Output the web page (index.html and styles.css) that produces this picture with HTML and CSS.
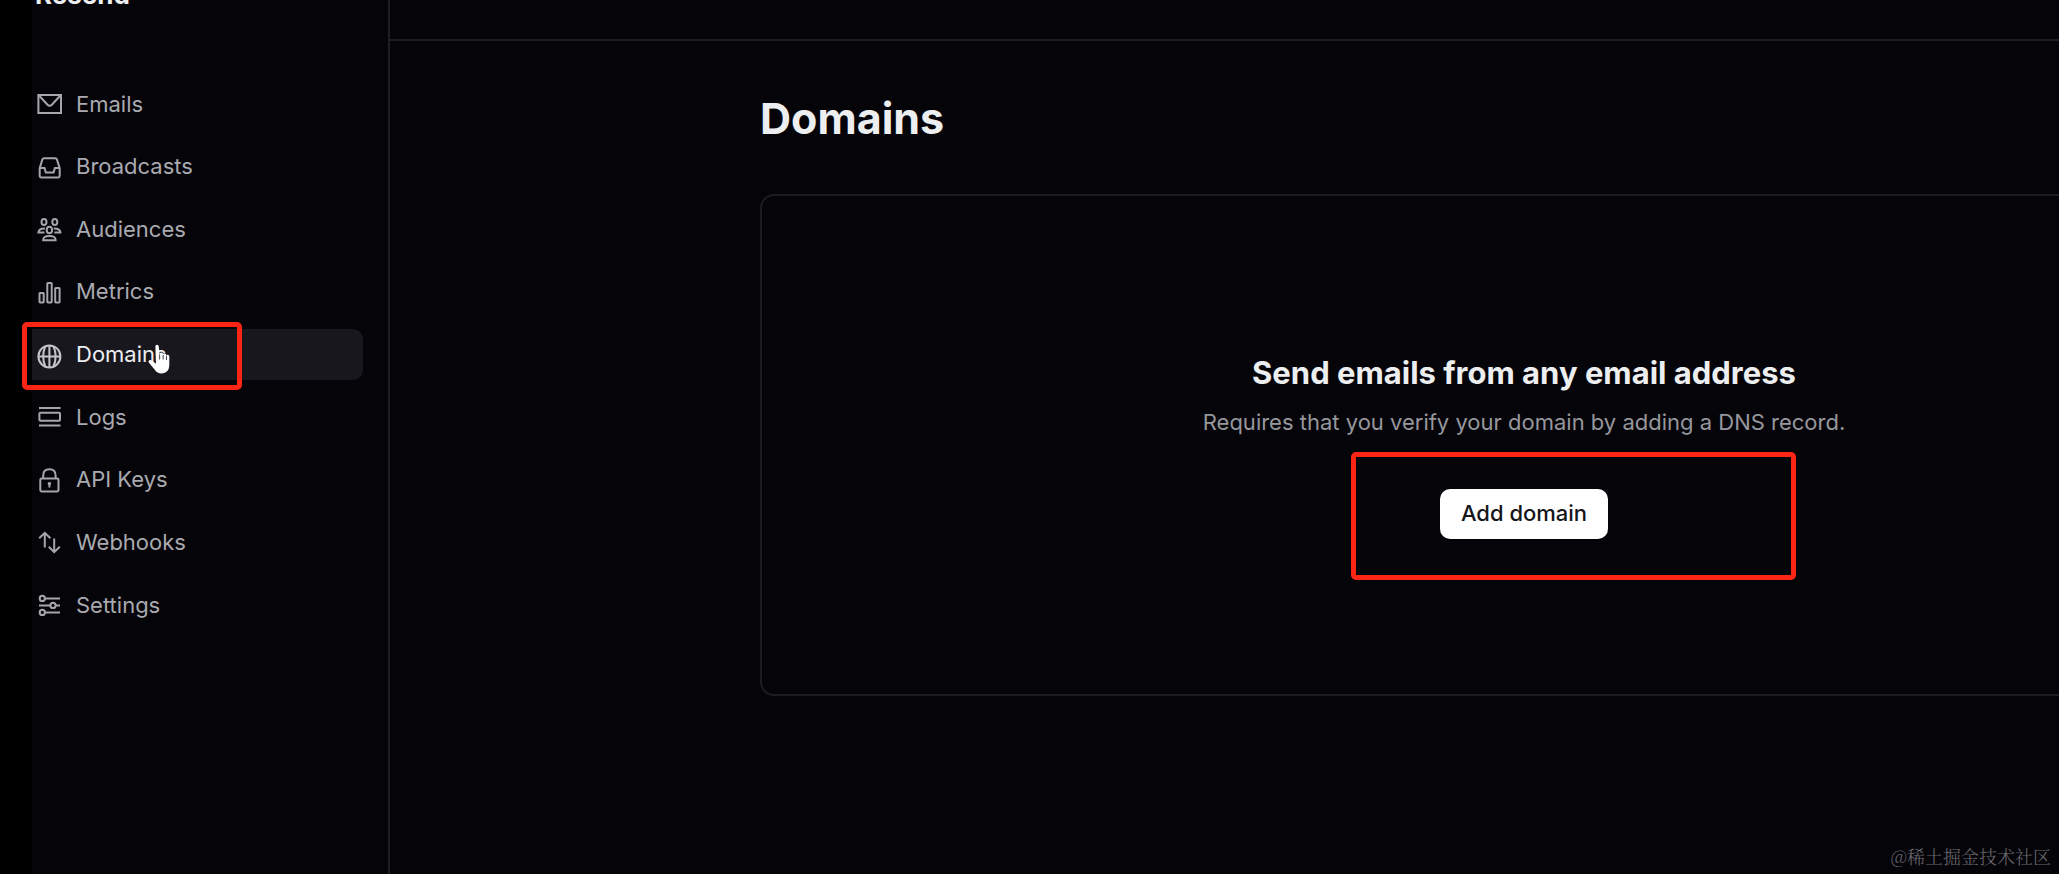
FILE: index.html
```html
<!DOCTYPE html>
<html lang="en">
<head>
  <meta charset="UTF-8">
  <title>Domains · Resend</title>
  <meta name="viewport" content="width=device-width, initial-scale=1.0">
  <link rel="stylesheet" href="styles.css">
</head>
<body>

  <aside class="sidebar">
    <div class="logo">Resend</div>
    <nav class="nav">
      <a href="#">
        <svg viewBox="0 0 25 25"><rect x="1.4" y="4" width="22.6" height="18"/><path d="M2 4.5l8.3 9q2.4 2.4 4.8 0l8.3-9"/></svg>
        Emails
      </a>
      <a href="#">
        <svg viewBox="0 0 25 25"><path d="M7 4.2h11.2q1.3 0 1.7 1.2l2.8 8.8v7.8q0 1.4-1.4 1.4H4.1q-1.4 0-1.4-1.4v-7.8l2.7-8.8q.4-1.2 1.6-1.2z"/><path d="M2.7 14h4.8l1.3 4.4h7.8l1.3-4.4h4.8"/></svg>
        Broadcasts
      </a>
      <a href="#">
        <svg viewBox="0 0 25 25"><ellipse cx="7" cy="6" rx="2.5" ry="3.1"/><ellipse cx="17.8" cy="6" rx="2.5" ry="3.1"/><ellipse cx="12.4" cy="14" rx="2.7" ry="3.3"/><path d="M7.5 16.4H1.4q.4-4.2 6.6-4M17.3 16.4h6.1q-.4-4.2-6.6-4M6.2 24.2q-.3-4.3 6.2-4.3t6.2 4.3z"/></svg>
        Audiences
      </a>
      <a href="#">
        <svg viewBox="0 0 25 25"><rect x="2.5" y="14" width="4.2" height="9.4" rx=".6"/><rect x="10.3" y="4" width="4.4" height="19.4" rx=".6"/><rect x="18.2" y="9" width="4.4" height="14.4" rx=".6"/></svg>
        Metrics
      </a>
      <a href="#" class="active">
        <svg viewBox="0 0 25 25"><circle cx="12.4" cy="14.4" r="11"/><path d="M12.4 3.4v22M1.4 14.4h22M8.4 4.2q-4.6 10.2 0 20.4M16.4 4.2q4.6 10.2 0 20.4"/></svg>
        Domains
        <span class="mark mark-nav"></span>
        <svg class="cursor" viewBox="0 0 26 34"><path d="M8 2.5q0-2 1.8-2t1.8 2l1 8.2q.3-2 2-1.8t1.8 2.2q.5-1.6 2-1.2t1.5 2.2q.6-1.2 1.9-.8t1.3 2.2v9.5q-.5 8-8 8.7-5 .2-8-4.3L.8 19.6q-.8-1.4.5-2.2 1.5-.8 3.6.6L8.6 21z"/><path class="lines" d="M12.6 11v5.5M16.4 11.5v5M20 12.5v4.5"/></svg>
      </a>
      <a href="#">
        <svg viewBox="0 0 25 25"><path d="M2 4h21.5M2 21.6h21.5"/><rect x="2.4" y="8.8" width="20.6" height="8" rx="1"/></svg>
        Logs
      </a>
      <a href="#">
        <svg viewBox="0 0 25 25"><rect x="3.3" y="11.4" width="18.2" height="13" rx="1.4"/><path d="M6.2 11.4V8.4q0-6.2 6.2-6.2t6.2 6.2v3M12.4 15.4v5"/><circle class="dot" cx="12.4" cy="16.6" r="1.7"/></svg>
        API Keys
      </a>
      <a href="#">
        <svg viewBox="0 0 25 25"><path d="M7.8 18.6V3.8M2.2 9.2l5.6-5.4 5.6 5.4M17.2 9.6v13.6M11.8 17.8l5.4 5.4 5.6-5.4"/></svg>
        Webhooks
      </a>
      <a href="#">
        <svg viewBox="0 0 25 25"><circle cx="5.3" cy="6.4" r="2.6"/><circle cx="16" cy="13.4" r="2.6"/><circle cx="5.3" cy="20.4" r="2.6"/><path d="M8 6.4h15M2 13.4h11.4M18.6 13.4H23M8 20.4h15"/></svg>
        Settings
      </a>
    </nav>
  </aside>

  <main class="main">
    <div class="topbar"></div>
    <div class="content">
      <h1>Domains</h1>
      <section class="empty">
        <h2>Send emails from any email address</h2>
        <p>Requires that you verify your domain by adding a DNS record.</p>
        <div class="action">
          <button type="button">Add domain</button>
          <span class="mark mark-button"></span>
        </div>
      </section>
    </div>
  </main>

  <div class="watermark">@稀土掘金技术社区</div>

</body>
</html>
```
FILE: styles.css
```css
* {
  box-sizing: border-box;
}

body {
  margin: 0;
  min-height: 100vh;
  display: flex;
  overflow: hidden;
  background: #050409;
  color: #edeef0;
  font-family: Inter, "Noto Sans CJK SC", sans-serif;
}

.sidebar {
  flex: 0 0 390px;
  padding-right: 25px;
  border-left: 32px solid #000;
  border-right: 2px solid #1e1e22;
}

.logo {
  height: 28px;
  margin: -19px 0 69px 3px;
  font-size: 26px;
  line-height: 28px;
  font-weight: 700;
}

.nav {
  height: 552px;
  display: flex;
  flex-direction: column;
  justify-content: space-between;
}

.nav a {
  position: relative;
  height: 51px;
  padding-left: 5px;
  display: flex;
  align-items: center;
  gap: 14px;
  border-radius: 0 10px 10px 0;
  color: #a9aab0;
  font-size: 22px;
  text-decoration: none;
}

.nav a.active {
  background: #18171e;
  color: #edeef0;
}

svg {
  width: 25px;
  height: 25px;
  overflow: visible;
  fill: none;
  stroke: #a5a6ac;
  stroke-width: 2;
}

.active svg {
  stroke: #c4c5ca;
}

.dot {
  fill: #a5a6ac;
  stroke: none;
}

/* red highlight frames */
.mark {
  position: absolute;
  border: 5px solid #fb2515;
  border-radius: 5px;
  pointer-events: none;
}

.mark-nav {
  top: -7px;
  left: -10px;
  width: 220px;
  height: 68px;
}

.mark-button {
  top: -37px;
  left: -89px;
  width: 445px;
  height: 128px;
}

.nav .cursor {
  position: absolute;
  top: 15px;
  left: 116px;
  width: 24px;
  height: 32px;
  fill: #fff;
  stroke: none;
}

.cursor .lines {
  stroke: #33323a;
  stroke-width: 1;
}

.main {
  flex: 1;
  min-width: 0;
  overflow: hidden;
}

.topbar {
  height: 41px;
  border-bottom: 2px solid #1e1e22;
}

/* the panel runs past the right edge of the window */
.content {
  margin-right: -229px;
  padding: 50px 0 0 370px;
}

h1 {
  margin: 0 0 49px;
  font-size: 43px;
  line-height: 54px;
  font-weight: 700;
}

.empty {
  height: 502px;
  display: flex;
  flex-direction: column;
  align-items: center;
  justify-content: center;
  border: 2px solid #1c1c20;
  border-radius: 14px;
}

h2 {
  margin: 0 0 11px;
  font-size: 31px;
  line-height: 44px;
  font-weight: 700;
}

.empty p {
  margin: 0 0 51px;
  color: #96979d;
  font-size: 22px;
  line-height: 32px;
}

.action {
  position: relative;
}

button {
  width: 168px;
  height: 50px;
  padding: 0 0 2px;
  border: none;
  border-radius: 10px;
  background: #fff;
  color: #16161a;
  font: 500 22px Inter, sans-serif;
  cursor: pointer;
}

.watermark {
  position: absolute;
  right: 8px;
  bottom: 5px;
  color: #6a6a6f;
  font: 300 18px/26px "Noto Serif CJK SC", "Noto Sans CJK SC", serif;
}
```
